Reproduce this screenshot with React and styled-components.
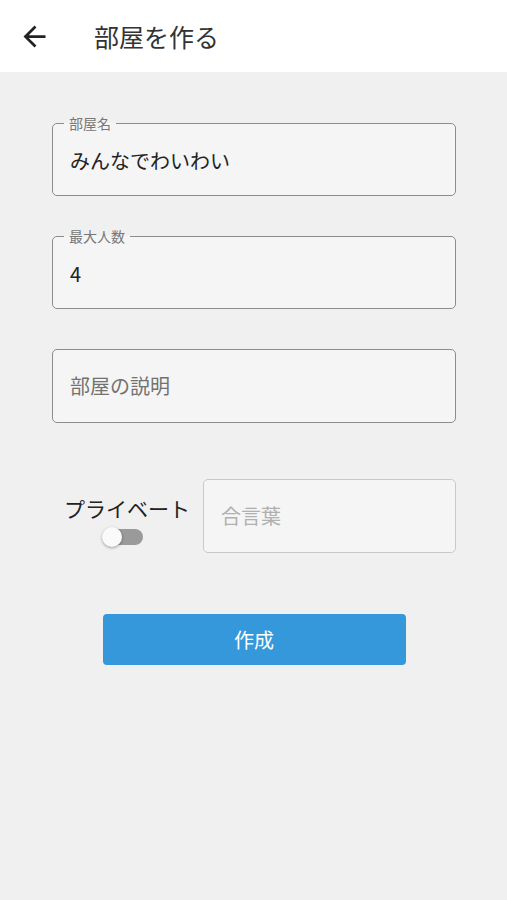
import styled, { createGlobalStyle } from 'styled-components';
import { MdArrowBack } from 'react-icons/md';

const GlobalStyle = createGlobalStyle`
    html, body {
        margin: 0;
        padding: 0;
        background: #f0f0f0;
        font-family: "Noto Sans CJK JP", "Noto Sans", sans-serif;
    }
`;

function App() {
    return (
        <Page>
            <GlobalStyle />
            <Header>
                <BackButton aria-label="戻る">
                    <MdArrowBack size={33} />
                </BackButton>
                <Title>部屋を作る</Title>
            </Header>
            <Form>
                <Outline>
                    <Legend>部屋名</Legend>
                    <Input defaultValue="みんなでわいわい" />
                </Outline>
                <Outline>
                    <Legend>最大人数</Legend>
                    <Input defaultValue="4" />
                </Outline>
                <Outline $plain>
                    <Input placeholder="部屋の説明" $plain />
                </Outline>
                <PrivateRow>
                    <ToggleColumn>
                        <ToggleLabel>プライベート</ToggleLabel>
                        <Switch>
                            <Thumb />
                        </Switch>
                    </ToggleColumn>
                    <Outline $plain $muted>
                        <Input placeholder="合言葉" $plain $faint />
                    </Outline>
                </PrivateRow>
                <SubmitButton>作成</SubmitButton>
            </Form>
        </Page>
    );
}

const Page = styled.div`
    min-height: 900px;
    background: #f0f0f0;
`;

const Header = styled.header`
    height: 72px;
    background: #fff;
    display: flex;
    align-items: center;
`;

const BackButton = styled.button`
    border: none;
    background: none;
    padding: 0;
    margin-left: 18px;
    width: 33px;
    height: 33px;
    display: flex;
    color: #222;
`;

const Title = styled.h1`
    margin: 0 0 0 43px;
    font-size: 25px;
    font-weight: 400;
    color: #333;
`;

const Form = styled.div`
    padding: 43px 51px 0 52px;
    display: flex;
    flex-direction: column;
`;

const Outline = styled.fieldset`
    margin: 0 0 32px;
    padding: 0 16px;
    min-width: 0;
    height: ${(p) => (p.$plain ? '74px' : '81px')};
    box-sizing: border-box;
    border: 1.5px solid ${(p) => (p.$muted ? '#c9c9c9' : '#8c8c8c')};
    border-radius: 5px;
    background: #f5f5f5;
    ${(p) => p.$plain && 'margin-top: 8px;'}
`;

const Legend = styled.legend`
    padding: 0 5px;
    margin-left: -5px;
    font-size: 14px;
    line-height: 16px;
    color: #777;
`;

const Input = styled.input`
    display: block;
    box-sizing: border-box;
    width: 100%;
    height: ${(p) => (p.$plain ? '71px' : '58px')};
    border: none;
    outline: none;
    background: transparent;
    padding: 0 0 0 1px;
    margin: 0;
    font-family: inherit;
    font-size: 20px;
    color: #222;
    &::placeholder {
        color: ${(p) => (p.$faint ? '#b0b0b0' : '#727272')};
    }
`;

const PrivateRow = styled.div`
    display: flex;
    align-items: center;
    gap: 13px;
    margin-top: 24px;
    padding-left: 12px;
    ${Outline} {
        flex: 1;
        margin: 0;
    }
`;

const ToggleColumn = styled.div`
    display: flex;
    flex-direction: column;
    align-items: center;
    gap: 8px;
    padding-top: 8px;
`;

const ToggleLabel = styled.span`
    font-size: 21px;
    line-height: 26px;
    color: #222;
`;

const Switch = styled.div`
    position: relative;
    width: 37px;
    height: 16px;
    border-radius: 8px;
    background: #9a9a9a;
    margin-left: -6px;
`;

const Thumb = styled.span`
    position: absolute;
    left: -4px;
    top: -2px;
    width: 20px;
    height: 20px;
    border-radius: 50%;
    background: #fafafa;
    box-shadow: 0 1px 3px rgba(0, 0, 0, 0.35);
`;

const SubmitButton = styled.button`
    align-self: center;
    margin-top: 61px;
    width: 303px;
    height: 51px;
    border: none;
    border-radius: 4px;
    background: #3498db;
    color: #fff;
    font-family: inherit;
    font-size: 20px;
`;

export default App;
